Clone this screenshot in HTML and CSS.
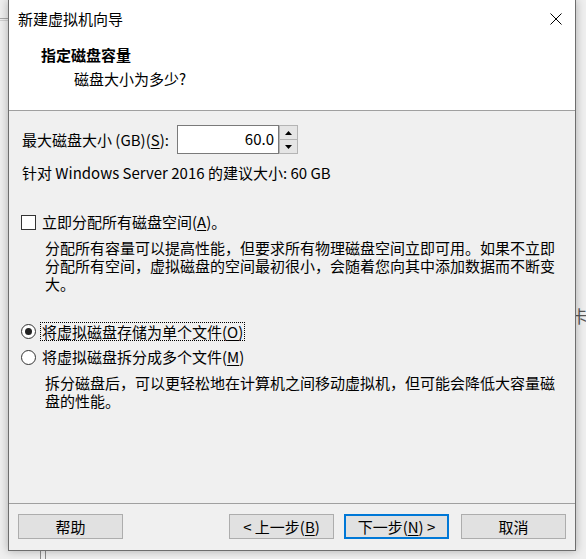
FILE: index.html
```html
<!DOCTYPE html>
<html lang="zh-CN">
<head>
<meta charset="utf-8">
<title>新建虚拟机向导</title>
<link rel="stylesheet" href="styles.css">
</head>
<body>
<div class="desk">
  <div class="bg-line"></div>
  <div class="bg-glyph">卡</div>
  <div class="bg-rail"></div>
  <div class="win">
    <div class="header">
      <div class="titlebar">
        <span class="title">新建虚拟机向导</span>
        <svg class="close" width="12" height="12" viewBox="0 0 12 12"><path d="M0.5 0.5L11.5 11.5M11.5 0.5L0.5 11.5" stroke="#000" stroke-width="1" fill="none"/></svg>
      </div>
      <div class="h1">指定磁盘容量</div>
      <div class="h2">磁盘大小为多少?</div>
    </div>
    <div class="body">
      <div class="size-row">
        <span class="size-label">最大磁盘大小 (GB)(<u>S</u>):</span>
        <div class="spin">
          <div class="field">60.0</div>
          <div class="arrows">
            <div class="arrow up"><svg width="7" height="4" viewBox="0 0 7 4"><path d="M3.5 0L7 4H0Z" fill="#000"/></svg></div>
            <div class="arrow down"><svg width="7" height="4" viewBox="0 0 7 4"><path d="M0 0H7L3.5 4Z" fill="#000"/></svg></div>
          </div>
        </div>
      </div>
      <div class="rec">针对 Windows Server 2016 的建议大小: 60 GB</div>
      <div class="opt check-row"><span class="box"></span><span>立即分配所有磁盘空间(<u>A</u>)。</span></div>
      <p class="desc">分配所有容量可以提高性能，但要求所有物理磁盘空间立即可用。如果不立即<br>分配所有空间，虚拟磁盘的空间最初很小，会随着您向其中添加数据而不断变<br>大。</p>
      <div class="opt radio-row first"><span class="radio on"></span><span class="focus">将虚拟磁盘存储为单个文件(<u>O</u>)</span></div>
      <div class="opt radio-row second"><span class="radio"></span><span class="lbl">将虚拟磁盘拆分成多个文件(<u>M</u>)</span></div>
      <p class="desc">拆分磁盘后，可以更轻松地在计算机之间移动虚拟机，但可能会降低大容量磁<br>盘的性能。</p>
    </div>
    <div class="footer">
      <button class="btn">帮助</button>
      <span class="spacer"></span>
      <button class="btn">&lt; 上一步(<u>B</u>)</button>
      <button class="btn default">下一步(<u>N</u>) &gt;</button>
      <button class="btn cancel">取消</button>
    </div>
  </div>
</div>
</body>
</html>
```
FILE: styles.css
```css
* { box-sizing: border-box; margin: 0; padding: 0; }
html, body { width: 586px; height: 559px; overflow: hidden; }
body {
  background: #efefef;
  font-family: "Noto Sans CJK SC", "Noto Sans", sans-serif;
  font-size: 15px;
  color: #000;
}
.desk { position: relative; height: 559px; padding-left: 8px; }
.bg-line { position: absolute; left: 0; top: 18px; width: 8px; height: 3px; border-top: 1px solid #a8a8a8; border-bottom: 1px solid #d0d0d0; }
.bg-glyph { position: absolute; left: 571px; top: 306px; font-size: 17px; line-height: 20px; color: #555; }
.bg-rail { position: absolute; left: 40px; top: 550px; width: 6px; height: 9px; border-left: 1px solid #8a8a8a; border-right: 1px solid #8a8a8a; }
.win {
  position: relative;
  width: 568px;
  height: 551px;
  background: #f0f0f0;
  border: 1px solid #6e6e6e;
  border-top: none;
  box-shadow: 0 0 9px rgba(0, 0, 0, 0.28);
  display: flex;
  flex-direction: column;
}
.header { background: #fff; height: 111px; border-bottom: 1px solid #a0a0a0; }
.titlebar { height: 38px; display: flex; align-items: center; padding-left: 9px; padding-right: 13px; }
.title { flex: 1; line-height: 20px; }
.close { display: block; }
.h1 { margin-top: 7px; padding-left: 32px; font-weight: bold; line-height: 20px; }
.h2 { margin-top: 4px; padding-left: 65px; line-height: 20px; }
.body { flex: 1; padding: 14px 0 0 12px; display: flex; flex-direction: column; align-items: flex-start; }
.size-row { display: flex; align-items: center; height: 29px; padding-left: 1px; }
.size-label { width: 155px; line-height: 20px; }
.spin { display: flex; height: 29px; }
.field { width: 102px; height: 29px; border: 1px solid #7a7a7a; background: #fff; text-align: right; padding-right: 4px; line-height: 25px; }
.arrows { width: 19px; display: flex; flex-direction: column; }
.arrow { flex: 1; background: #e5e5e5; border: 1px solid #b4b4b4; display: flex; align-items: center; justify-content: center; }
.arrow.down { border-top: none; }
.arrow svg { display: block; }
.rec { margin-top: 10px; padding-left: 1px; line-height: 18px; }
.opt { display: flex; align-items: center; line-height: 18px; }
.check-row { margin-top: 31px; }
.box { width: 15px; height: 15px; border: 1px solid #333; background: #fff; margin-right: 6px; }
.desc { margin-left: 24px; margin-top: 8px; line-height: 18px; white-space: nowrap; }
.radio-row.first { margin-top: 29px; }
.radio-row.second { margin-top: 7px; }
.radio { width: 15px; height: 15px; border: 1px solid #333; border-radius: 50%; background: #fff; margin-right: 4px; display: flex; align-items: center; justify-content: center; }
.radio.on::after { content: ""; width: 7px; height: 7px; border-radius: 50%; background: #222; }
.focus { border: 1px dotted #000; padding: 0 1px; line-height: 17px; }
.lbl { padding-left: 2px; }
.footer { height: 47px; border-top: 1px solid #a0a0a0; padding: 10px 9px 11px; display: flex; }
.spacer { flex: 1; }
.btn {
  width: 105px;
  height: 25px;
  background: #e1e1e1;
  border: 1px solid #adadad;
  font: inherit;
  font-size: 15px;
  line-height: 21px;
  color: #000;
  margin-left: 10px;
}
.btn:first-child { margin-left: 0; }
.btn.default { border: 2px solid #0078d7; }
.btn.cancel { margin-left: 12px; }
.btn u, .size-row u, .opt u { text-decoration: underline; text-underline-offset: 2px; }
```
